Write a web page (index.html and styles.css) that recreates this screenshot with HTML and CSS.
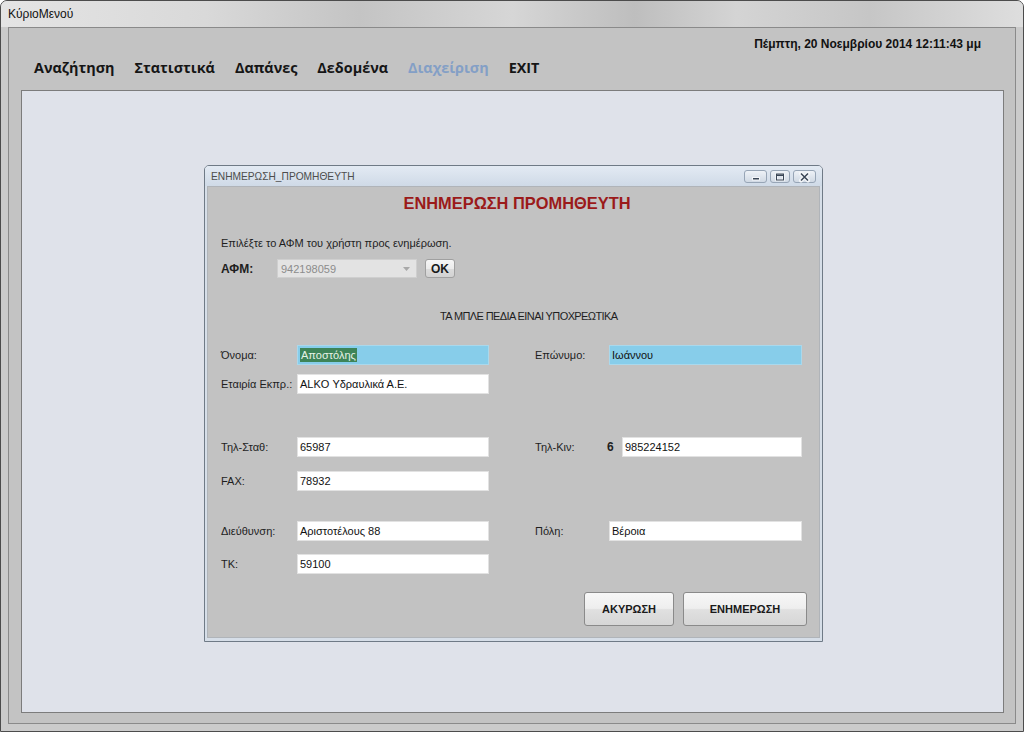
FILE: index.html
```html
<!DOCTYPE html>
<html lang="el">
<head>
<meta charset="utf-8">
<title>ΚύριοΜενού</title>
<link rel="stylesheet" href="styles.css">
</head>
<body>
<div class="window">
  <div class="titlebar">ΚύριοΜενού</div>
  <div class="frame">
    <div class="client">
      <div class="datebar">Πέμπτη, 20 Νοεμβρίου 2014 12:11:43 μμ</div>
      <nav class="menu">
        <span class="mi">Αναζήτηση</span>
        <span class="mi">Στατιστικά</span>
        <span class="mi">Δαπάνες</span>
        <span class="mi">Δεδομένα</span>
        <span class="mi active">Διαχείριση</span>
        <span class="mi">EXIT</span>
      </nav>
      <div class="panel">
        <div class="dialog">
          <div class="dtitle">
            <span class="dtitle-text">ΕΝΗΜΕΡΩΣΗ_ΠΡΟΜΗΘΕΥΤΗ</span>
            <div class="wbtns">
              <span class="wb wb-min"><svg width="21" height="12" viewBox="0 0 21 12"><rect x="7.5" y="6.5" width="7" height="2.5" fill="#3a4656" stroke="#f4f6f9" stroke-width="1"/></svg></span>
              <span class="wb wb-max"><svg width="18" height="12" viewBox="0 0 18 12"><rect x="5.5" y="3" width="7" height="6" fill="none" stroke="#f4f6f9" stroke-width="2.5"/><rect x="5.5" y="3" width="7" height="6" fill="none" stroke="#3a4656" stroke-width="1"/><rect x="6" y="3.5" width="6" height="1.5" fill="#3a4656"/></svg></span>
              <span class="wb wb-close"><svg width="21" height="12" viewBox="0 0 21 12"><path d="M7 2.5 L14 9.5 M14 2.5 L7 9.5" stroke="#f4f6f9" stroke-width="4" stroke-linecap="round"/><path d="M7 2.5 L14 9.5 M14 2.5 L7 9.5" stroke="#3a4656" stroke-width="1.5"/></svg></span>
            </div>
          </div>
          <div class="dbody">
            <h1 class="heading">ΕΝΗΜΕΡΩΣΗ ΠΡΟΜΗΘΕΥΤΗ</h1>
            <p class="instr">Επιλέξτε το ΑΦΜ του χρήστη προς ενημέρωση.</p>
            <div class="afm-row">
              <span class="afm-lab">ΑΦΜ:</span>
              <div class="combo"><span>942198059</span><svg class="caret" width="7" height="4" viewBox="0 0 7 4"><path d="M0 0 H7 L3.5 4 Z" fill="#a8a8a8"/></svg></div>
              <button class="btn btn-ok">OK</button>
            </div>
            <p class="notice">ΤΑ ΜΠΛΕ ΠΕΔΙΑ ΕΙΝΑΙ ΥΠΟΧΡΕΩΤΙΚΑ</p>

            <div class="row r1">
              <span class="lab">Όνομα:</span>
              <div class="field req"><span class="sel">Αποστόλης</span></div>
              <div class="rgroup">
                <span class="rlab">Επώνυμο:</span>
                <div class="field req wide">Ιωάννου</div>
              </div>
            </div>
            <div class="row r2">
              <span class="lab">Εταιρία Εκπρ.:</span>
              <div class="field">ALKO Υδραυλικά Α.Ε.</div>
            </div>
            <div class="row r3">
              <span class="lab">Τηλ-Σταθ:</span>
              <div class="field">65987</div>
              <div class="rgroup">
                <span class="rlab short">Τηλ-Κιν:</span>
                <span class="prefix">6</span>
                <div class="field mob">985224152</div>
              </div>
            </div>
            <div class="row r4">
              <span class="lab">FAX:</span>
              <div class="field">78932</div>
            </div>
            <div class="row r5">
              <span class="lab">Διεύθυνση:</span>
              <div class="field">Αριστοτέλους 88</div>
              <div class="rgroup">
                <span class="rlab">Πόλη:</span>
                <div class="field wide">Βέροια</div>
              </div>
            </div>
            <div class="row r6">
              <span class="lab">ΤΚ:</span>
              <div class="field">59100</div>
            </div>

            <div class="actions">
              <button class="btn btn-big btn-cancel">ΑΚΥΡΩΣΗ</button>
              <button class="btn btn-big btn-update">ΕΝΗΜΕΡΩΣΗ</button>
            </div>
          </div>
        </div>
      </div>
    </div>
  </div>
</div>
</body>
</html>
```

FILE: styles.css
```css
* { box-sizing: border-box; }

html, body {
  margin: 0;
  padding: 0;
  width: 1024px;
  height: 732px;
  overflow: hidden;
  background: #ffffff;
  font-family: "Liberation Sans", Arial, sans-serif;
  color: #1c1c1c;
}

.window {
  width: 1024px;
  height: 732px;
  border: 1px solid #4c4c4c;
  border-radius: 7px 7px 0 0;
  background: #cbcbcb;
  display: flex;
  flex-direction: column;
}

.titlebar {
  height: 26px;
  padding-left: 7px;
  font-size: 12px;
  line-height: 26px;
  color: #111;
  border-radius: 6px 6px 0 0;
  background:
    linear-gradient(to right, #e4e4e4 0%, #d9d9d9 20%, #c4c4c4 35%, #d6d6d6 50%, #bebebe 62%, #d4d4d4 72%, #c6c6c6 85%, #dedede 100%);
}

.frame {
  flex: 1;
  display: flex;
  padding: 0 7px 7px 7px;
  min-height: 0;
}

.client {
  flex: 1;
  display: flex;
  flex-direction: column;
  border: 1px solid #8a8a8a;
  background: #c3c3c3;
  padding: 0 11px 10px 12px;
  min-height: 0;
}

.datebar {
  padding-top: 10px;
  padding-right: 23px;
  text-align: right;
  font-size: 12px;
  font-weight: bold;
  line-height: 13px;
  color: #111;
}

.menu {
  display: flex;
  gap: 20px;
  margin-top: 7px;
  margin-left: 13px;
  height: 20px;
  align-items: center;
}

.mi {
  font-family: "Open Sans", "Noto Sans", sans-serif;
  font-weight: 700;
  font-size: 14.4px;
  line-height: 20px;
  color: #151515;
}

.mi.active {
  color: #839fc6;
}

.panel {
  flex: 1;
  margin-top: 12px;
  border: 1px solid #7c7c7c;
  background: #dfe2ea;
  padding: 74px 0 0 182px;
  min-height: 0;
}

/* dialog window */
.dialog {
  width: 619px;
  height: 477px;
  border: 1px solid #6f7a86;
  border-radius: 5px 5px 0 0;
  background: #d6dee8;
  display: flex;
  flex-direction: column;
  padding: 0 2px 3px 2px;
}

.dtitle {
  height: 20px;
  display: flex;
  align-items: center;
  justify-content: space-between;
  margin: 0 -2px;
  padding: 0 6px 0 6px;
  border-radius: 4px 4px 0 0;
  background: linear-gradient(#e3eaf3, #cfdae7);
}

.dtitle-text {
  font-size: 10.2px;
  color: #4d4d4d;
}

.wbtns {
  display: flex;
  gap: 3px;
  margin-top: 1px;
}

.wb {
  display: block;
  height: 13px;
  border: 1px solid #97a5b6;
  border-radius: 3px;
  background: linear-gradient(#eef2f7, #d0d9e4);
}

.wb svg { display: block; margin-top: -0.5px; }

.dbody {
  flex: 1;
  background: #c2c2c2;
  border: 1px solid #b0b4b9;
  padding: 7px 12px 10px 13px;
  font-size: 11px;
  color: #1e1e1e;
}

.heading {
  margin: 0;
  text-align: center;
  font-size: 16.4px;
  font-weight: bold;
  line-height: 19px;
  color: #9b1a1a;
  padding-left: 6px;
}

.instr {
  margin: 23px 0 0 0;
  font-size: 11px;
  line-height: 14px;
}

.afm-row {
  display: flex;
  align-items: center;
  margin-top: 9px;
  height: 19px;
}

.afm-lab {
  width: 56px;
  font-weight: bold;
  font-size: 12px;
}

.combo {
  width: 140px;
  height: 19px;
  display: flex;
  align-items: center;
  justify-content: space-between;
  padding: 0 6px 0 3px;
  background: #e3e3e3;
  border: 1px solid #cfcfcf;
  color: #8c8c8c;
  font-size: 11px;
}

.caret { display: block; }

.btn {
  font-family: "Liberation Sans", Arial, sans-serif;
  font-weight: bold;
  font-size: 11px;
  color: #1a1a1a;
  border: 1px solid #7d7d7d;
  border-radius: 3px;
  background: linear-gradient(#f6f6f6 0%, #ececec 50%, #dcdcdc 51%, #d2d2d2 100%);
  padding: 0;
  cursor: default;
}

.btn-ok {
  margin-left: 8px;
  width: 30px;
  height: 19px;
  font-size: 12px;
  border-color: #a0a0a0;
}

.notice {
  margin: 31px 0 0 0;
  padding-left: 219px;
  font-family: "Liberation Sans Narrow", "Liberation Sans", Arial, sans-serif;
  font-size: 11px;
  line-height: 14px;
  letter-spacing: -0.6px;
  color: #1e1e1e;
}

.row {
  display: flex;
  align-items: center;
  height: 20px;
}

.r1 { margin-top: 22px; }
.r2 { margin-top: 9px; }
.r3 { margin-top: 43px; }
.r4 { margin-top: 14px; }
.r5 { margin-top: 30px; }
.r6 { margin-top: 13px; }

.lab {
  width: 76px;
  white-space: nowrap;
}

.field {
  width: 192px;
  height: 20px;
  background: #ffffff;
  border: 1px solid #e2e2e2;
  padding: 0 2px;
  line-height: 18px;
  font-size: 11px;
  color: #111;
  white-space: nowrap;
}

.field.req {
  background: #87cdea;
  border-color: #a9d8ec;
}

.field.wide { width: 193px; }
.field.mob { width: 180px; }

.sel {
  background: #3d8458;
  color: #e6f2e6;
  padding: 1px 1px;
}

.rgroup {
  display: flex;
  align-items: center;
  margin-left: 46px;
}

.rlab { width: 74px; }
.rlab.short { width: 72px; }

.prefix {
  width: 15px;
  font-weight: bold;
  font-size: 12px;
}

.actions {
  display: flex;
  justify-content: flex-end;
  gap: 9px;
  margin-top: 18px;
  padding-right: 0;
}

.btn-big {
  height: 34px;
  border-color: #8a8a8a;
  background: linear-gradient(#f7f7f7 0%, #eeeeee 48%, #e0e0e0 52%, #d6d6d6 100%);
}

.btn-cancel { width: 90px; }
.btn-update { width: 124px; }
```
